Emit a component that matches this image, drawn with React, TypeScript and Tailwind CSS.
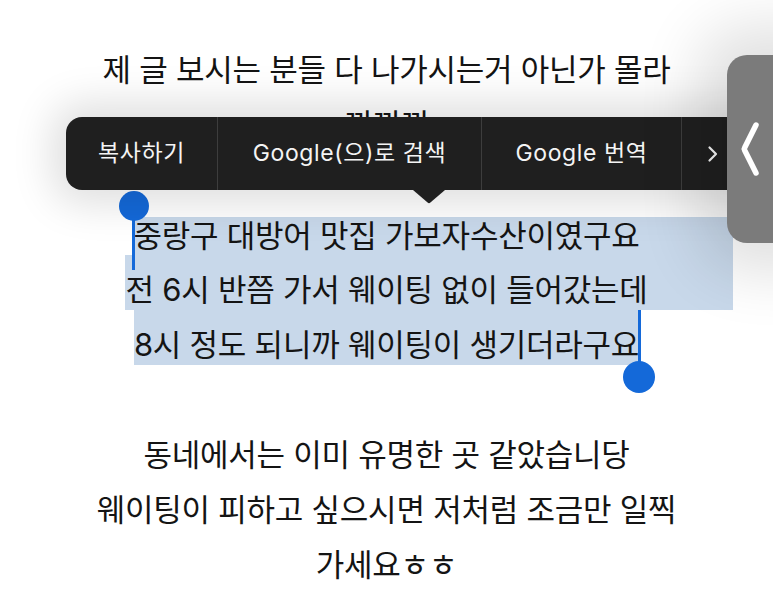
const FONT = "font-['Inter','Noto_Sans_CJK_KR',sans-serif]";

function PlainLine({ text }: { text: string }) {
  return <div className="h-[55px] whitespace-nowrap pt-[15px] text-center leading-[40px]">{text}</div>;
}

function LeftHandle() {
  return (
    <div className="absolute -left-[2px] -top-[26px] flex w-[4px] flex-col items-center">
      <div className="h-[30px] w-[30px] shrink-0 rounded-full bg-[#1469d9]" />
      <div className="-mt-[15px] h-[64px] w-[3px] bg-[#1469d9]" />
    </div>
  );
}

function RightHandle() {
  return (
    <div className="absolute -right-[2px] top-0 flex w-[4px] flex-col items-center">
      <div className="h-[67px] w-[3px] bg-[#1469d9]" />
      <div className="-mt-[16px] h-[32px] w-[32px] shrink-0 rounded-full bg-[#1469d9]" />
    </div>
  );
}

function SelectionMenu() {
  return (
    <div className="absolute left-[66px] top-[117px] w-[740px]">
      <div className="flex h-[73px] items-stretch rounded-[16px] bg-[#1f1f1f] text-[23px] tracking-[0.6px] text-[#f4f4f4] shadow-[0_0_40px_14px_rgba(0,0,0,0.13)]">
        <div className="flex w-[151px] items-center justify-center">복사하기</div>
        <div className="w-px bg-[#3d3d3d]" />
        <div className="flex w-[263px] items-center justify-center">Google(으)로 검색</div>
        <div className="w-px bg-[#3d3d3d]" />
        <div className="flex w-[199px] items-center justify-center">Google 번역</div>
        <div className="w-px bg-[#3d3d3d]" />
        <div className="flex w-[62px] items-center justify-center">
          <svg width="12" height="18" viewBox="0 0 12 18" fill="none">
            <path d="M2.5 2.5 L9 9 L2.5 15.5" stroke="#f4f4f4" strokeWidth="2.2" strokeLinecap="round" strokeLinejoin="round" />
          </svg>
        </div>
      </div>
      <svg className="ml-[347px] block" width="32" height="14" viewBox="0 0 32 14">
        <path d="M0 0 H32 L17.4 12.6 Q16 13.8 14.6 12.6 Z" fill="#1f1f1f" />
      </svg>
    </div>
  );
}

function SidePanel() {
  return (
    <div className="absolute left-[727px] top-[55px] flex h-[188px] w-[80px] items-center rounded-l-[20px] bg-[#7b7b7b] pl-[13px] shadow-[0_0_60px_30px_rgba(0,0,0,0.12)]">
      <svg width="22" height="56" viewBox="0 0 22 56" fill="none">
        <path d="M16 4 Q9 18 4.5 27 Q3.8 28 4.5 29 Q9 38 16 52" stroke="#ffffff" strokeWidth="5.5" strokeLinecap="round" strokeLinejoin="round" />
      </svg>
    </div>
  );
}

export default function App() {
  return (
    <div className={`relative h-[606px] w-[773px] overflow-hidden bg-white ${FONT}`}>
      <div className="px-[40px] pt-[35px] text-[31px] tracking-[-0.25px] text-[#141414]">
        <PlainLine text="제 글 보시는 분들 다 나가시는거 아닌가 몰라" />
        <PlainLine text="꿔꿔꿔" />
        <div className="h-[55px]" />

        <div className="h-[55px] pt-[17px]">
          <div className="flex h-[38px] whitespace-nowrap">
            <div className="flex-1" />
            <span className="relative bg-[#c8d8ea] leading-[38px]">
              중랑구 대방어 맛집 가보자수산이였구요
              <LeftHandle />
            </span>
            <div className="flex-1 bg-[#c8d8ea]" />
          </div>
        </div>
        <div className="flex h-[55px] whitespace-nowrap">
          <div className="flex-1" />
          <span className="bg-[#c8d8ea] pt-[15px] leading-[40px]">전 6시 반쯤 가서 웨이팅 없이 들어갔는데</span>
          <div className="flex-1 bg-[#c8d8ea]" />
        </div>
        <div className="flex h-[55px] whitespace-nowrap">
          <div className="flex-1" />
          <span className="relative bg-[#c8d8ea] pt-[15px] leading-[40px]">
            8시 정도 되니까 웨이팅이 생기더라구요
            <RightHandle />
          </span>
          <div className="flex-1" />
        </div>
        <div className="h-[55px]" />

        <PlainLine text="동네에서는 이미 유명한 곳 같았습니당" />
        <PlainLine text="웨이팅이 피하고 싶으시면 저처럼 조금만 일찍" />
        <PlainLine text="가세요ㅎㅎ" />
      </div>

      <SelectionMenu />
      <SidePanel />
    </div>
  );
}
